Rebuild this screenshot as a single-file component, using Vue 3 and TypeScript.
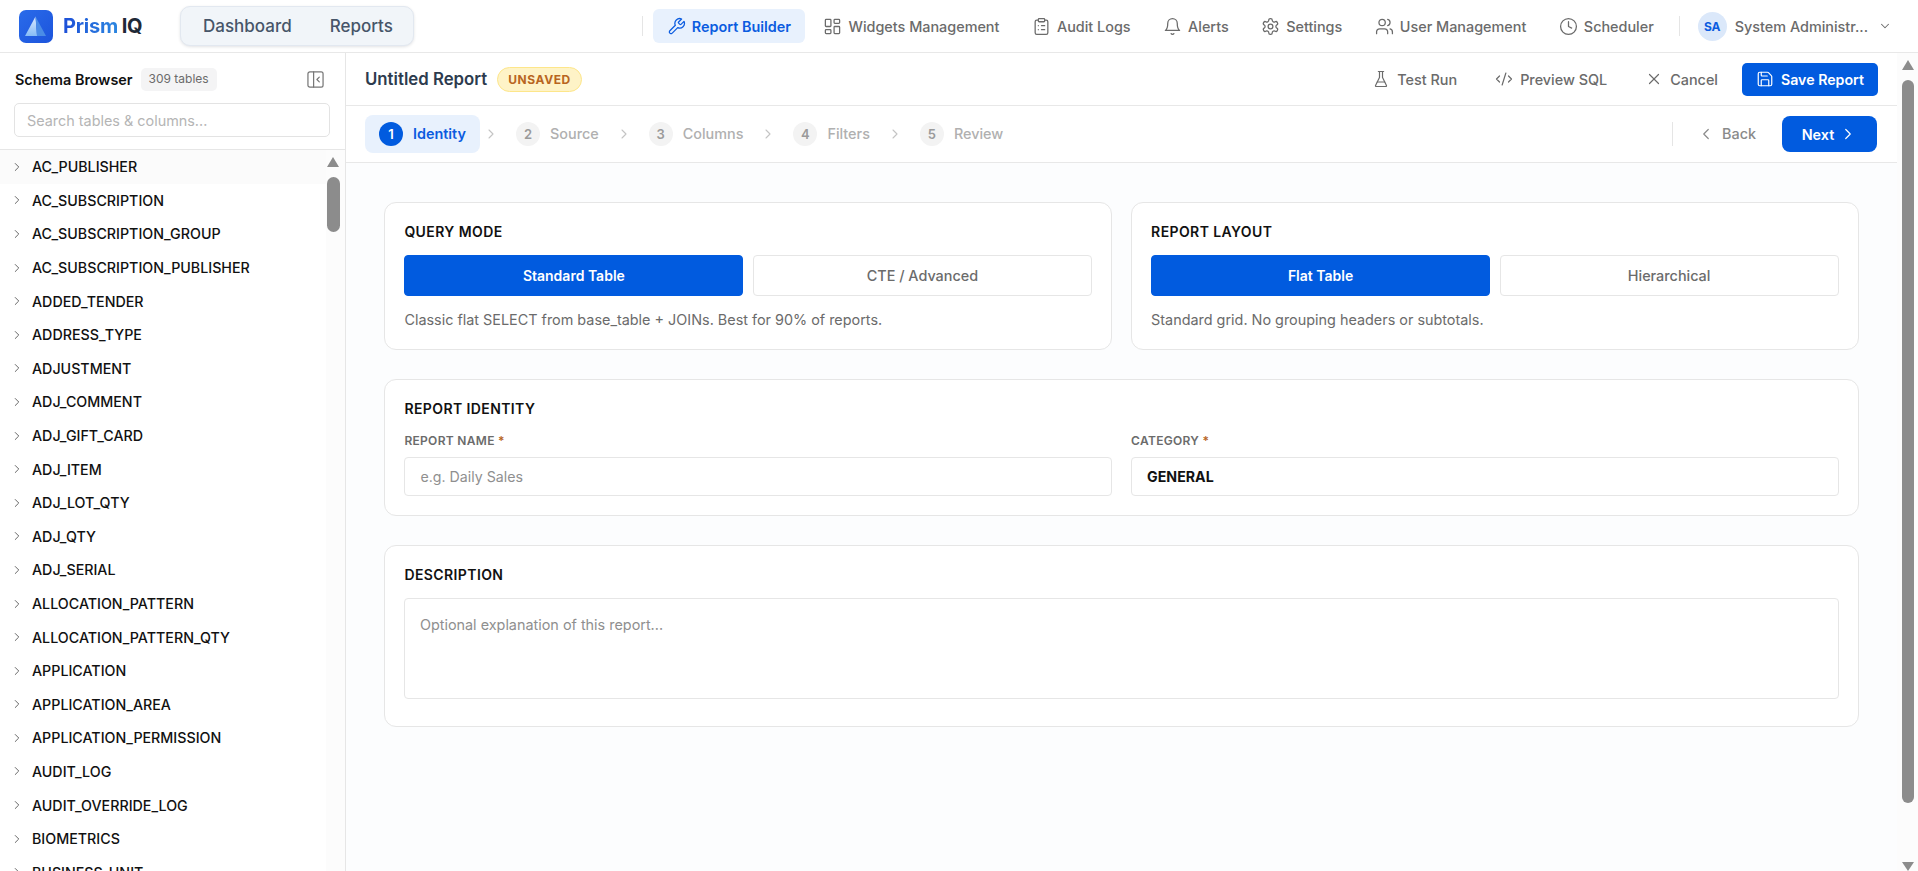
<script setup lang="ts">
const tables: string[] = ['AC_PUBLISHER','AC_SUBSCRIPTION','AC_SUBSCRIPTION_GROUP','AC_SUBSCRIPTION_PUBLISHER','ADDED_TENDER','ADDRESS_TYPE','ADJUSTMENT','ADJ_COMMENT','ADJ_GIFT_CARD','ADJ_ITEM','ADJ_LOT_QTY','ADJ_QTY','ADJ_SERIAL','ALLOCATION_PATTERN','ALLOCATION_PATTERN_QTY','APPLICATION','APPLICATION_AREA','APPLICATION_PERMISSION','AUDIT_LOG','AUDIT_OVERRIDE_LOG','BIOMETRICS','BUSINESS_UNIT']
const steps = [
  { n: 2, label: 'Source' },
  { n: 3, label: 'Columns' },
  { n: 4, label: 'Filters' },
  { n: 5, label: 'Review' },
]
</script>

<template>
  <div class="app">
    <header class="topbar">
      <div class="brand">
        <svg class="logo" viewBox="0 0 34 33" width="34" height="33">
          <defs>
            <linearGradient id="lg-bg" x1="0" y1="0" x2="1" y2="1">
              <stop offset="0" stop-color="#2a6bea" />
              <stop offset="1" stop-color="#1c54dc" />
            </linearGradient>
            <linearGradient id="lg-face" x1="0" y1="0" x2="0" y2="1">
              <stop offset="0" stop-color="#dbeafe" />
              <stop offset="1" stop-color="#86bcf6" />
            </linearGradient>
          </defs>
          <rect width="34" height="33" rx="7" fill="url(#lg-bg)" />
          <path d="M16.5 6.5 L6 26 L18 26 Z" fill="url(#lg-face)" />
          <path d="M16.5 6.5 L18 26 L27 26 Z" fill="#4a8ce6" />
        </svg>
        <span class="wordmark"><span class="wm-blue">Prism</span> <span class="wm-dark">IQ</span></span>
      </div>
      <div class="pillnav">
        <span>Dashboard</span>
        <span>Reports</span>
      </div>
      <nav class="mainnav">
        <span class="vsep"></span>
        <a class="navitem active">
          <svg class="ic-nav" viewBox="0 0 24 24"><path d="M14.7 6.3a1 1 0 0 0 0 1.4l1.6 1.6a1 1 0 0 0 1.4 0l3.77-3.77a6 6 0 0 1-7.94 7.94l-6.91 6.91a2.12 2.12 0 0 1-3-3l6.91-6.91a6 6 0 0 1 7.94-7.94l-3.76 3.76z"/></svg>
          Report Builder
        </a>
        <a class="navitem">
          <svg class="ic-nav" viewBox="0 0 24 24"><rect x="3" y="3" width="7" height="9" rx="1"/><rect x="14" y="3" width="7" height="5" rx="1"/><rect x="14" y="12" width="7" height="9" rx="1"/><rect x="3" y="16" width="7" height="5" rx="1"/></svg>
          Widgets Management
        </a>
        <a class="navitem">
          <svg class="ic-nav" viewBox="0 0 24 24"><rect x="8" y="2" width="8" height="4" rx="1"/><path d="M16 4h2a2 2 0 0 1 2 2v14a2 2 0 0 1-2 2H6a2 2 0 0 1-2-2V6a2 2 0 0 1 2-2h2"/><path d="M12 11h4M12 16h4M8 11h.01M8 16h.01"/></svg>
          Audit Logs
        </a>
        <a class="navitem">
          <svg class="ic-nav" viewBox="0 0 24 24"><path d="M10.3 21a1.94 1.94 0 0 0 3.4 0"/><path d="M6 8a6 6 0 0 1 12 0c0 7 3 9 3 9H3s3-2 3-9"/></svg>
          Alerts
        </a>
        <a class="navitem">
          <svg class="ic-nav" viewBox="0 0 24 24"><path d="M12.22 2h-.44a2 2 0 0 0-2 2v.18a2 2 0 0 1-1 1.73l-.43.25a2 2 0 0 1-2 0l-.15-.08a2 2 0 0 0-2.73.73l-.22.38a2 2 0 0 0 .73 2.73l.15.1a2 2 0 0 1 1 1.72v.51a2 2 0 0 1-1 1.74l-.15.09a2 2 0 0 0-.73 2.73l.22.38a2 2 0 0 0 2.73.73l.15-.08a2 2 0 0 1 2 0l.43.25a2 2 0 0 1 1 1.73V20a2 2 0 0 0 2 2h.44a2 2 0 0 0 2-2v-.18a2 2 0 0 1 1-1.73l.43-.25a2 2 0 0 1 2 0l.15.08a2 2 0 0 0 2.73-.73l.22-.39a2 2 0 0 0-.73-2.73l-.15-.08a2 2 0 0 1-1-1.74v-.5a2 2 0 0 1 1-1.74l.15-.09a2 2 0 0 0 .73-2.73l-.22-.38a2 2 0 0 0-2.73-.73l-.15.08a2 2 0 0 1-2 0l-.43-.25a2 2 0 0 1-1-1.73V4a2 2 0 0 0-2-2z"/><circle cx="12" cy="12" r="3"/></svg>
          Settings
        </a>
        <a class="navitem">
          <svg class="ic-nav" viewBox="0 0 24 24"><path d="M16 21v-2a4 4 0 0 0-4-4H6a4 4 0 0 0-4 4v2"/><circle cx="9" cy="7" r="4"/><path d="M22 21v-2a4 4 0 0 0-3-3.87"/><path d="M16 3.13a4 4 0 0 1 0 7.75"/></svg>
          User Management
        </a>
        <a class="navitem">
          <svg class="ic-nav" viewBox="0 0 24 24"><circle cx="12" cy="12" r="10"/><path d="M12 6v6l4 2"/></svg>
          Scheduler
        </a>
        <span class="vsep user-sep"></span>
        <div class="user">
          <span class="avatar">SA</span>
          <span class="uname">System Administr...</span>
          <svg class="ic-sm" viewBox="0 0 24 24"><path d="m6 9 6 6 6-6"/></svg>
        </div>
      </nav>
    </header>

    <div class="body">
      <aside class="sidebar">
        <div class="side-head">
          <div class="side-title">
            <strong>Schema Browser</strong>
            <span class="count">309 tables</span>
            <svg class="collapse" viewBox="0 0 18 18"><rect x="1" y="1" width="16" height="16" rx="2"/><path d="M7 1v16"/><path d="M13 6.5 10.5 9l2.5 2.5"/></svg>
          </div>
          <input class="search" placeholder="Search tables &amp; columns..." />
        </div>
        <div class="side-list">
          <ul class="rows">
            <li v-for="(t, i) in tables" :key="t" class="row" :class="{ hover: i === 0 }">
              <svg class="chev" viewBox="0 0 24 24"><path d="m9 6 6 6-6 6"/></svg>
              <span>{{ t }}</span>
            </li>
          </ul>
          <div class="sbar side-sbar">
            <span class="tri up"></span>
            <span class="thumb"></span>
          </div>
        </div>
      </aside>

      <main class="main">
        <div class="main-col">
          <div class="main-head">
            <div class="title-wrap">
              <h1>Untitled Report</h1>
              <span class="unsaved">UNSAVED</span>
            </div>
            <div class="actions">
              <a class="act">
                <svg class="ic" viewBox="0 0 24 24"><path d="M10 2v7.53a2 2 0 0 1-.21.9L4.72 20.55A1 1 0 0 0 5.61 22h12.78a1 1 0 0 0 .89-1.45l-5.07-10.12a2 2 0 0 1-.21-.9V2"/><path d="M8.5 2h7"/><path d="M7 16h10"/></svg>
                Test Run
              </a>
              <a class="act">
                <svg class="ic" viewBox="0 0 24 24"><path d="m18 16 4-4-4-4"/><path d="m6 8-4 4 4 4"/><path d="m14.5 4-5 16"/></svg>
                Preview SQL
              </a>
              <a class="act">
                <svg class="ic" viewBox="0 0 24 24"><path d="M18 6 6 18"/><path d="m6 6 12 12"/></svg>
                Cancel
              </a>
              <button class="primary save">
                <svg class="ic" viewBox="0 0 24 24"><path d="M15.2 3a2 2 0 0 1 1.4.6l3.8 3.8a2 2 0 0 1 .6 1.4V19a2 2 0 0 1-2 2H5a2 2 0 0 1-2-2V5a2 2 0 0 1 2-2z"/><path d="M17 21v-7a1 1 0 0 0-1-1H8a1 1 0 0 0-1 1v7"/><path d="M7 3v4a1 1 0 0 0 1 1h7"/></svg>
                Save Report
              </button>
            </div>
          </div>

          <div class="stepper">
            <div class="step current"><span class="num">1</span>Identity</div>
            <template v-for="s in steps" :key="s.n">
              <svg class="step-chev" viewBox="0 0 24 24"><path d="m9 6 6 6-6 6"/></svg>
              <div class="step"><span class="num">{{ s.n }}</span>{{ s.label }}</div>
            </template>
            <div class="step-right">
              <span class="vsep"></span>
              <a class="back">
                <svg class="ic" viewBox="0 0 24 24"><path d="m15 18-6-6 6-6"/></svg>
                Back
              </a>
              <button class="primary next">
                Next
                <svg class="ic" viewBox="0 0 24 24"><path d="m9 18 6-6-6-6"/></svg>
              </button>
            </div>
          </div>

          <div class="content">
            <div class="two">
              <section class="card mode">
                <h2>QUERY MODE</h2>
                <div class="toggles">
                  <button class="tog on">Standard Table</button>
                  <button class="tog">CTE / Advanced</button>
                </div>
                <p class="hint">Classic flat SELECT from base_table + JOINs. Best for 90% of reports.</p>
              </section>
              <section class="card mode">
                <h2>REPORT LAYOUT</h2>
                <div class="toggles">
                  <button class="tog on">Flat Table</button>
                  <button class="tog">Hierarchical</button>
                </div>
                <p class="hint">Standard grid. No grouping headers or subtotals.</p>
              </section>
            </div>

            <section class="card identity">
              <h2>REPORT IDENTITY</h2>
              <div class="fields">
                <label class="field">
                  <span class="lbl">REPORT NAME <em>*</em></span>
                  <input class="inp" placeholder="e.g. Daily Sales" />
                </label>
                <label class="field">
                  <span class="lbl">CATEGORY <em>*</em></span>
                  <input class="inp strong" value="GENERAL" />
                </label>
              </div>
            </section>

            <section class="card desc">
              <h2>DESCRIPTION</h2>
              <textarea class="ta" placeholder="Optional explanation of this report..."></textarea>
            </section>
          </div>
        </div>
        <div class="sbar main-sbar">
          <span class="tri up"></span>
          <span class="thumb"></span>
          <span class="tri down"></span>
        </div>
      </main>
    </div>
  </div>
</template>

<style>
html, body { margin: 0; height: 100%; overflow: hidden; background: #fff; }
</style>

<style scoped>
* { box-sizing: border-box; }
.app { width: 1918px; height: 871px; display: flex; flex-direction: column; overflow: hidden; font-family: Inter, "Liberation Sans", sans-serif; font-size: 14.4px; color: #111; background: #fff; }
svg { fill: none; stroke: currentColor; stroke-linecap: round; stroke-linejoin: round; flex: none; }
.ic { width: 18px; height: 18px; stroke-width: 1.6; }
.ic-nav { width: 19px; height: 19px; stroke-width: 1.6; }
.ic-sm { width: 14px; height: 14px; stroke-width: 1.8; }

.topbar { height: 53px; flex: none; display: flex; align-items: center; padding-left: 19px; border-bottom: 1.5px solid #e8e8e8; }
.brand { display: flex; align-items: center; gap: 10px; width: 161px; }
.logo { stroke: none; }
.wordmark { font-size: 20px; font-weight: 700; letter-spacing: -0.2px; word-spacing: -1px; white-space: nowrap; }
.wm-blue { background: linear-gradient(90deg, #1d4fd8, #2b86e0); -webkit-background-clip: text; background-clip: text; color: transparent; }
.wm-dark { color: #1f2937; }
.pillnav { width: 234px; height: 40px; display: flex; align-items: center; gap: 38px; padding-left: 22px; background: #f1f5f9; border: 1px solid #e2e8f0; border-radius: 10px; box-shadow: 0 1px 3px rgba(15, 23, 42, .12); font-size: 17px; font-weight: 500; color: #475569; }
.mainnav { margin-left: auto; display: flex; align-items: center; height: 100%; padding-right: 26px; }
.vsep { width: 1px; height: 20px; background: #e5e5e5; display: block; }
.navitem { display: flex; align-items: center; gap: 6px; height: 34px; padding: 0 14px; margin-right: 4.5px; color: #6b6b6b; font-weight: 500; font-size: 14.4px; border-radius: 6px; white-space: nowrap; }
.mainnav > .vsep:first-child { margin-right: 10px; }
.navitem.active { background: #e8f1fd; color: #0b5ce0; font-weight: 600; }
.user-sep { margin: 0 18px 0 6.5px; }
.user { display: flex; align-items: center; gap: 8px; color: #6b6b6b; font-weight: 500; }
.avatar { width: 29px; height: 29px; border-radius: 50%; background: #dbe8fa; color: #0b5ce0; font-size: 12px; font-weight: 700; display: flex; align-items: center; justify-content: center; }
.uname { white-space: nowrap; }
.user .ic-sm { margin-left: 2px; }

.body { flex: 1; display: flex; min-height: 0; }
.sidebar { width: 346px; flex: none; display: flex; flex-direction: column; border-right: 1px solid #e6e6e6; min-height: 0; }
.side-head { padding: 15px 15px 12px 14px; height: 97px; border-bottom: 1px solid #e6e6e6; flex: none; }
.side-title { display: flex; align-items: center; height: 23px; margin-bottom: 12px; padding-left: 1px; }
.side-title strong { font-size: 14.4px; font-weight: 600; color: #111; }
.count { margin-left: 8px; height: 23px; padding: 0 8px; line-height: 22px; background: #f4f4f5; border-radius: 5px; font-size: 12px; color: #6b6b6b; white-space: nowrap; }
.collapse { margin-left: auto; margin-right: 6px; width: 17px; height: 17px; color: #777; stroke-width: 1.3; }
.search { display: block; width: 316px; height: 34px; padding: 0 12px; border: 1px solid #e3e3e3; border-radius: 5px; font: 400 14.4px Inter, sans-serif; color: #111; outline: none; }
.search::placeholder { color: #b5b5b5; opacity: 1; }
.side-list { flex: 1; min-height: 0; display: flex; overflow: hidden; }
.rows { list-style: none; margin: 0; padding: 0; flex: 1; min-width: 0; }
.row { height: 33.6px; display: flex; align-items: center; gap: 8px; padding-left: 10px; font-size: 14.25px; font-weight: 500; color: #111; white-space: nowrap; }
.row.hover { background: #fbfbfb; }
.chev { width: 14px; height: 14px; color: #666; stroke-width: 1.7; }

.sbar { flex: none; display: flex; flex-direction: column; align-items: center; background: #fcfcfc; }
.side-sbar { width: 19px; padding: 7px 5px 0 0; }
.main-sbar { width: 21px; padding: 7px 0 0 0; }
.tri { display: block; width: 0; height: 0; border-left: 6.5px solid transparent; border-right: 6.5px solid transparent; }
.tri.up { border-bottom: 10px solid #8c8c8c; }
.tri.down { border-top: 9px solid #8c8c8c; margin-top: 59px; }
.thumb { display: block; width: 13px; background: #8c8c8c; border-radius: 7px; margin-top: 10px; }
.side-sbar .thumb { height: 55px; }
.main-sbar .thumb { width: 12px; height: 724px; }

.main { flex: 1; min-width: 0; display: flex; }
.main-col { flex: 1; min-width: 0; display: flex; flex-direction: column; }
.main-head { height: 53px; flex: none; display: flex; align-items: center; justify-content: space-between; padding: 0 19px; border-bottom: 1.5px solid #e8e8e8; }
.title-wrap { display: flex; align-items: center; gap: 10px; }
h1 { margin: 0; font-size: 16.8px; font-weight: 600; color: #2d3b4e; }
.unsaved { height: 25px; padding: 0 10px; line-height: 23px; background: #fef3c7; border: 1px solid #fde68a; border-radius: 13px; color: #b8651f; font-size: 12px; font-weight: 700; letter-spacing: .6px; }
.actions { display: flex; align-items: center; }
.act { display: flex; align-items: center; gap: 7px; padding: 0 13px; margin-right: 12px; color: #6b6b6b; font-size: 14.4px; font-weight: 500; white-space: nowrap; }
.act:nth-child(3) { margin-right: 11px; }
.primary { border: 0; background: #015bdf; color: #fff; font: 600 14.2px Inter, sans-serif; border-radius: 5px; display: flex; align-items: center; justify-content: center; gap: 7px; }
.save { width: 136px; height: 33px; }

.stepper { height: 57px; flex: none; display: flex; align-items: center; padding: 0 20px 0 19px; border-bottom: 1.5px solid #e8e8e8; }
.step { display: flex; align-items: center; gap: 10px; height: 38px; padding: 0 14px 1px; color: #b0b0b0; font-weight: 500; font-size: 14.4px; }
.step.current { background: #e8f1fd; border-radius: 8px; color: #0b5ce0; font-weight: 600; }
.num { width: 24px; height: 24px; border-radius: 50%; background: #f3f3f3; display: flex; align-items: center; justify-content: center; font-size: 13px; font-weight: 600; color: #9a9a9a; }
.current .num { background: #015bdf; color: #fff; }
.step-chev { width: 16px; height: 16px; margin: 0 3px; color: #c4c4c4; stroke-width: 1.6; }
.step-right { margin-left: auto; display: flex; align-items: center; }
.step-right .vsep { height: 24px; margin-right: 24px; }
.back { display: flex; align-items: center; gap: 7px; color: #8a8a8a; font-weight: 500; margin-right: 26px; padding-bottom: 1px; }
.next { width: 95px; height: 36px; border-radius: 8px; font-size: 14.4px; gap: 5px; padding-bottom: 1px; }

.content { flex: 1; min-height: 0; background: #fcfdfe; padding: 39px 38.4px 0; display: flex; flex-direction: column; gap: 28.8px; }
.two { display: grid; grid-template-columns: 1fr 1fr; gap: 19.2px; }
.card { background: #fff; border: 1px solid #e6e6e6; border-radius: 12px; padding: 0 19px; }
h2 { margin: 0; font-size: 14px; font-weight: 600; color: #111; letter-spacing: .4px; line-height: 20px; }
.mode { height: 148px; padding-top: 19px; }
.toggles { display: grid; grid-template-columns: 1fr 1fr; gap: 9.6px; margin-top: 13px; }
.tog { height: 41px; border: 1px solid #e6e6e6; background: #fff; border-radius: 4px; color: #6b6b6b; font: 500 14.4px Inter, sans-serif; }
.tog.on { background: #015bdf; border-color: #015bdf; color: #fff; font: 600 14px Inter, sans-serif; }
.hint { margin: 14px 0 0; font-size: 14.4px; line-height: 20px; color: #6b6b6b; }
.identity { height: 137px; padding-top: 19px; }
.fields { display: grid; grid-template-columns: 1fr 1fr; gap: 19.2px; margin-top: 14px; }
.field { display: block; }
.lbl { display: block; font-size: 12px; font-weight: 600; letter-spacing: .3px; line-height: 16px; color: #6b6b6b; margin-bottom: 8px; }
.lbl em { font-style: normal; color: #b8651f; }
.inp { display: block; width: 100%; height: 39px; padding: 0 15px; border: 1px solid #e6e6e6; border-radius: 4px; font: 400 14.2px Inter, sans-serif; color: #111; outline: none; background: #fff; }
.inp::placeholder, .ta::placeholder { color: #8f8f8f; opacity: 1; }
.inp.strong { font-weight: 700; }
.desc { height: 182px; padding-top: 19px; }
.ta { display: block; width: 100%; height: 101px; margin-top: 13px; padding: 17px 14.5px; border: 1px solid #e6e6e6; border-radius: 4px; font: 400 14.4px Inter, sans-serif; resize: none; outline: none; background: #fff; }
</style>
